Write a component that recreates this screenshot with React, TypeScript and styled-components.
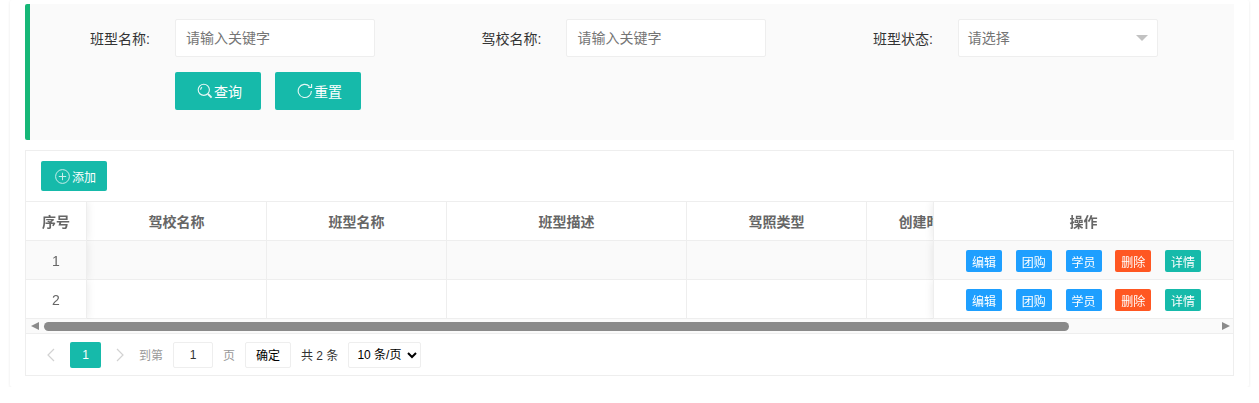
import React from 'react'
import styled, { createGlobalStyle } from 'styled-components'

const GlobalStyle = createGlobalStyle`
  html, body {
    margin: 0;
    padding: 0;
    background: #fff;
    font-family: "Liberation Sans", "Noto Sans CJK SC", sans-serif;
    font-size: 14px;
    color: #333;
  }
  * { box-sizing: border-box; }
`

const Card = styled.section`
  margin: 0 10px;
  width: 1239px;
  height: 387px;
  padding: 4px 15px 0;
  background: #fff;
  border-radius: 2px;
  box-shadow: 0 1px 3px 0 rgba(0, 0, 0, 0.09);
`

const FilterPanel = styled.form`
  height: 136px;
  padding: 15px 0 0 6px;
  background: #fafafa;
  border-left: 5px solid #16b777;
  border-radius: 2px 0 0 2px;
`

const FormRow = styled.div`
  display: grid;
  grid-template-columns: repeat(3, 391.4px);
`

const FormItem = styled.div`
  display: flex;
  align-items: center;
`

const Label = styled.label`
  width: 114px;
  margin-right: 25px;
  text-align: right;
  color: #333;
  white-space: nowrap;
`

const TextInput = styled.input`
  width: 200px;
  height: 38px;
  padding: 0 10px;
  background: #fff;
  border: 1px solid #eee;
  border-radius: 2px;
  font: inherit;
  color: #333;
  outline: none;

  &::placeholder { color: #757575; }
`

const SelectBox = styled.div`
  position: relative;
  width: 200px;
  height: 38px;
  padding: 0 10px 2px 9px;
  display: flex;
  align-items: center;
  background: #fff;
  border: 1px solid #eee;
  border-radius: 2px;
  color: #757575;

  &::after {
    content: '';
    position: absolute;
    right: 9px;
    top: 15px;
    border-style: solid;
    border-width: 6px 6px 0;
    border-color: #c2c2c2 transparent transparent;
  }
`

const ButtonRow = styled.div`
  display: flex;
  gap: 14px;
  margin: 15px 0 0 139px;
`

const Button = styled.button<{ $small?: boolean }>`
  display: inline-flex;
  align-items: center;
  justify-content: center;
  gap: ${p => (p.$small ? '2px' : '1px')};
  width: ${p => (p.$small ? '66px' : '86px')};
  height: ${p => (p.$small ? '30px' : '38px')};
  padding: 0 0 0 3px;
  background: #16baaa;
  border: 0;
  border-radius: 2px;
  color: #fff;
  font: inherit;
  font-size: ${p => (p.$small ? '12px' : '14px')};
`

const TableBox = styled.div`
  margin-top: 10px;
  height: 226px;
  background: #fff;
  border: 1px solid #eee;
`

const Toolbar = styled.div`
  height: 51px;
  padding: 10px 15px;
  border-bottom: 1px solid #eee;
`

const Rows = styled.div`
  overflow: hidden;
  height: 117px;
`

const Row = styled.div<{ $stripe?: boolean }>`
  display: flex;
  width: max-content;
  height: 39px;
  --row-bg: ${p => (p.$stripe ? '#fafafa' : '#fff')};
  background: var(--row-bg);
`

const Cell = styled.div<{ $w: number; $head?: boolean }>`
  flex: none;
  width: ${p => p.$w}px;
  padding-top: ${p => (p.$head ? '0' : '2px')};
  display: flex;
  align-items: center;
  justify-content: center;
  border-right: 1px solid #eee;
  border-bottom: 1px solid #eee;
  font-size: 14px;
  font-weight: ${p => (p.$head ? 700 : 400)};
  color: #666;
  white-space: nowrap;
  overflow: hidden;
`

const LeftCell = styled(Cell)`
  position: sticky;
  left: 0;
  z-index: 1;
  background: var(--row-bg);
  box-shadow: 1px 0 8px rgba(0, 0, 0, 0.08);
  clip-path: inset(0 -10px 0 0);
`

const RightCell = styled(Cell)`
  position: sticky;
  right: 0;
  z-index: 1;
  gap: 13.75px;
  border-right: 0;
  border-left: 1px solid #eee;
  background: var(--row-bg);
  box-shadow: -1px 0 8px rgba(0, 0, 0, 0.08);
  clip-path: inset(0 0 0 -10px);
`

const Tag = styled.span<{ $color: string }>`
  width: 36px;
  height: 22px;
  display: flex;
  align-items: center;
  justify-content: center;
  background: ${p => p.$color};
  border-radius: 2px;
  color: #fff;
  font-size: 12px;
  font-weight: 400;
`

const ScrollBar = styled.div`
  height: 15px;
  padding: 0 3px 0 5px;
  display: flex;
  align-items: center;
  gap: 5px;
  background: #fafafa;
  border-bottom: 1px solid #eee;
`

const Arrow = styled.span<{ $dir: 'left' | 'right' }>`
  flex: none;
  width: 0;
  height: 0;
  border-style: solid;
  border-color: transparent;
  border-width: 4.5px 0;
  ${p => (p.$dir === 'left' ? 'border-right: 8px solid #8a8a8a;' : 'border-left: 8px solid #8a8a8a;')}
`

const Track = styled.div`
  flex: 1;
  height: 9px;
`

const Thumb = styled.div`
  height: 9px;
  background: #8a8a8a;
  border-radius: 5px;
`

const Pager = styled.div`
  height: 41px;
  padding-left: 19px;
  display: flex;
  align-items: center;
  font-size: 12px;
  color: #999;
`

const Chevron = styled.svg`
  flex: none;
  width: 12px;
  height: 14px;
`

const PageNum = styled.span`
  width: 31px;
  height: 26px;
  margin: 0 13px;
  display: flex;
  align-items: center;
  justify-content: center;
  background: #16baaa;
  border-radius: 2px;
  color: #fff;
`

const PagerText = styled.span<{ $dark?: boolean; $first?: boolean }>`
  margin: 0 10px 0 ${p => (p.$first ? '13px' : '10px')};
  color: ${p => (p.$dark ? '#333' : '#999')};
  white-space: nowrap;
`

const PageInput = styled.input`
  width: 40px;
  height: 26px;
  padding: 0;
  text-align: center;
  background: #fff;
  border: 1px solid #eee;
  border-radius: 2px;
  font: inherit;
  color: #333;
`

const ConfirmButton = styled.button`
  width: 46px;
  height: 26px;
  padding: 0;
  background: #fff;
  border: 1px solid #eee;
  border-radius: 2px;
  font: inherit;
  color: #000;
`

const PageSize = styled.select`
  width: 73px;
  height: 26px;
  padding: 0 0 0 4px;
  background: #fff;
  border: 1px solid #eee;
  border-radius: 2px;
  font: inherit;
  color: #000;
`

function SearchIcon() {
  return (
    <svg width="16" height="16" viewBox="0 0 16 16" fill="none" stroke="#e8f8f6" strokeWidth="1.1">
      <circle cx="6.8" cy="6.8" r="5.6" />
      <path d="M3.6 6.8a3.2 3.2 0 0 1 1.4-2.6" />
      <path d="M11 11l3.6 3.6" strokeWidth="1.8" />
    </svg>
  )
}

function RefreshIcon() {
  return (
    <svg width="16" height="16" viewBox="0 0 16 16" fill="none" stroke="#e8f8f6" strokeWidth="1.1">
      <path d="M14.4 8a6.6 6.6 0 1 1-1.9-4.7" />
      <path d="M14.6 1v3.4h-3.4" />
    </svg>
  )
}

function PlusCircleIcon() {
  return (
    <svg width="15" height="15" viewBox="0 0 15 15" fill="none" stroke="#c8eeea" strokeWidth="1">
      <circle cx="7.5" cy="7.5" r="6.9" />
      <path d="M7.5 3.8v7.4M3.8 7.5h7.4" />
    </svg>
  )
}

const columns = [
  { title: '驾校名称', width: 180 },
  { title: '班型名称', width: 180 },
  { title: '班型描述', width: 240 },
  { title: '驾照类型', width: 180 },
  { title: '创建时间', width: 120 },
]

const actions = [
  { label: '编辑', color: '#1e9fff' },
  { label: '团购', color: '#1e9fff' },
  { label: '学员', color: '#1e9fff' },
  { label: '删除', color: '#ff5722' },
  { label: '详情', color: '#16baaa' },
]

function App() {
  return (
    <>
      <GlobalStyle />
      <Card>
        <FilterPanel>
          <FormRow>
            <FormItem>
              <Label>班型名称:</Label>
              <TextInput placeholder="请输入关键字" />
            </FormItem>
            <FormItem>
              <Label>驾校名称:</Label>
              <TextInput placeholder="请输入关键字" />
            </FormItem>
            <FormItem>
              <Label>班型状态:</Label>
              <SelectBox>请选择</SelectBox>
            </FormItem>
          </FormRow>
          <ButtonRow>
            <Button type="button">
              <SearchIcon />
              查询
            </Button>
            <Button type="button">
              <RefreshIcon />
              重置
            </Button>
          </ButtonRow>
        </FilterPanel>
        <TableBox>
          <Toolbar>
            <Button type="button" $small>
              <PlusCircleIcon />
              添加
            </Button>
          </Toolbar>
          <Rows>
            <Row>
              <LeftCell $w={61} $head>序号</LeftCell>
              {columns.map(c => (
                <Cell key={c.title} $w={c.width} $head>{c.title}</Cell>
              ))}
              <RightCell $w={300} $head>操作</RightCell>
            </Row>
            {[1, 2].map(n => (
              <Row key={n} $stripe={n === 1}>
                <LeftCell $w={61}>{n}</LeftCell>
                {columns.map(c => (
                  <Cell key={c.title} $w={c.width} />
                ))}
                <RightCell $w={300}>
                  {actions.map(a => (
                    <Tag key={a.label} $color={a.color}>{a.label}</Tag>
                  ))}
                </RightCell>
              </Row>
            ))}
          </Rows>
          <ScrollBar>
            <Arrow $dir="left" />
            <Track>
              <Thumb style={{ width: `${(1025 / 1173) * 100}%` }} />
            </Track>
            <Arrow $dir="right" />
          </ScrollBar>
          <Pager>
            <Chevron viewBox="0 0 12 14" fill="none" stroke="#d2d2d2" strokeWidth="1.2">
              <path d="M9 1L3 7l6 6" />
            </Chevron>
            <PageNum>1</PageNum>
            <Chevron viewBox="0 0 12 14" fill="none" stroke="#d2d2d2" strokeWidth="1.2">
              <path d="M3 1l6 6-6 6" />
            </Chevron>
            <PagerText $first>到第</PagerText>
            <PageInput defaultValue="1" />
            <PagerText>页</PagerText>
            <ConfirmButton type="button">确定</ConfirmButton>
            <PagerText $dark>共 2 条</PagerText>
            <PageSize defaultValue="10">
              <option value="10">10 条/页</option>
              <option value="20">20 条/页</option>
            </PageSize>
          </Pager>
        </TableBox>
      </Card>
    </>
  )
}

export default App
